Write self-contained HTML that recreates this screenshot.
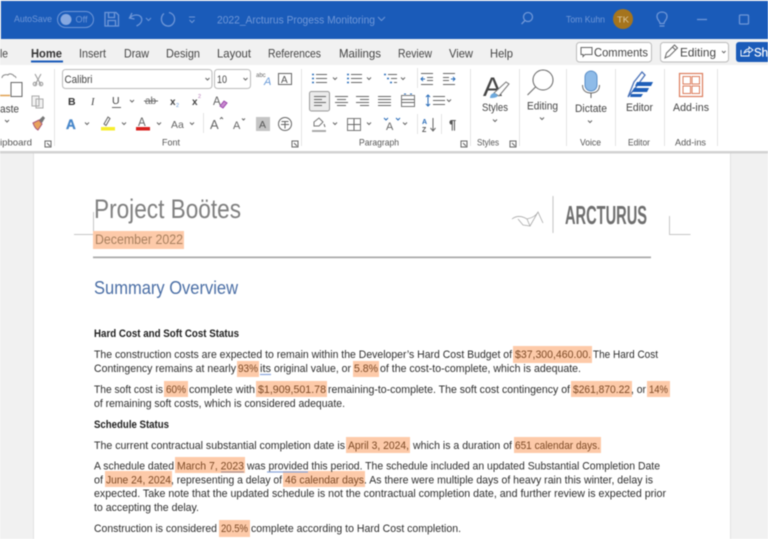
<!DOCTYPE html>
<html lang="en"><head><meta charset="utf-8"><title>Project Boötes</title>
<style>
html,body{margin:0;padding:0;width:768px;height:539px;overflow:hidden;background:#fff}
svg{display:block;font-family:"Liberation Sans",sans-serif;filter:blur(.4px)}
.d{font-size:11.2px;fill:#2e2e2e}
.h{font-size:11.2px;fill:#7d4a26}
.b{font-size:11px;fill:#1e1e1e;font-weight:bold}
.t{font-size:12px;fill:#444}
.r{font-size:11px;fill:#444}
.l{font-size:9.2px;fill:#555}
.q{font-size:9.4px;fill:#6f97d8}
.k{fill:none;stroke:#666;stroke-width:1}
.c{fill:none;stroke:#666;stroke-width:1}
.w{fill:none;stroke:#6f97d8;stroke-width:1.3}
.hl{fill:#fdcaa9}
</style></head><body>
<svg width="768" height="539" viewBox="0 0 768 539" xmlns="http://www.w3.org/2000/svg">
<rect width="768" height="539" fill="#f1f1f1"/>
<!-- title bar -->
<rect x="1" y="1" width="767" height="38" fill="#1a5bb9"/>
<text class="q" x="14" y="22" textLength="38" lengthAdjust="spacingAndGlyphs">AutoSave</text>
<rect x="57.500" y="11.500" width="36" height="16" rx="8" fill="none" stroke="#6f97d8"/>
<circle cx="66" cy="19.500" r="5.500" fill="#86a8e0"/>
<text class="q" x="75.500" y="22.500" textLength="12" lengthAdjust="spacingAndGlyphs">Off</text>
<path class="w" d="M105 12.500h11l2.500 2.500v11h-13.500zM108.500 12.500v5h6v-5M108 26v-5.500h7.500V26"/>
<path class="w" d="M132 13l-2.500 5 5 1M130 18c3-4 10-4 11.500 0 1 3-1 6-5 8"/>
<path class="w" d="M146 18l2.500 2.500 2.500-2.500" style="stroke-width:1"/>
<path class="w" d="M169 12.500c4 1 6 4 5.500 8-1 4-4 6-7 5.500-4-.5-6.500-4-6-8 .3-2 1.200-3.500 2.500-4.500"/>
<path class="w" d="M189 17h6M189.500 20l2.500 2.500 2.500-2.500" style="stroke-width:1"/>
<text x="217" y="23.500" font-size="11" fill="#6f97d8" textLength="158" lengthAdjust="spacingAndGlyphs">2022_Arcturus Progess Monitoring</text>
<path class="w" d="M378 17l3.500 3.500 3.500-3.500" style="stroke-width:1"/>
<circle cx="528" cy="17" r="4.500" class="w"/><path class="w" d="M525 20.500l-3.500 3.500"/>
<text class="q" x="566" y="22.500" textLength="39" lengthAdjust="spacingAndGlyphs">Tom Kuhn</text>
<circle cx="623" cy="19" r="10" fill="#a5741d"/>
<text x="617" y="22.500" font-size="8.600" fill="#ddc9a0" textLength="12" lengthAdjust="spacingAndGlyphs">TK</text>
<path class="w" d="M659.500 26h5M660 23.500c0-2.500-3-3.500-3-7 0-3 2.300-4.500 5-4.500s5 1.500 5 4.500c0 3.500-3 4.500-3 7z"/>
<path class="w" d="M697 19.500h10"/>
<rect class="w" x="739.500" y="15" width="9" height="9" rx="1"/>
<!-- tabs -->
<rect x="0" y="40" width="768" height="25" fill="#f1f1f1"/>
<text class="t" x="0" y="57.500" textLength="8" lengthAdjust="spacingAndGlyphs">le</text>
<text class="t" x="31" y="57.500" textLength="31" lengthAdjust="spacingAndGlyphs" style="font-weight:bold;fill:#333">Home</text>
<rect x="31" y="60.500" width="32" height="2" fill="#1a5bb9"/>
<text class="t" x="79" y="57.500" textLength="27" lengthAdjust="spacingAndGlyphs">Insert</text>
<text class="t" x="124" y="57.500" textLength="25" lengthAdjust="spacingAndGlyphs">Draw</text>
<text class="t" x="166" y="57.500" textLength="34" lengthAdjust="spacingAndGlyphs">Design</text>
<text class="t" x="217" y="57.500" textLength="34" lengthAdjust="spacingAndGlyphs">Layout</text>
<text class="t" x="268" y="57.500" textLength="53" lengthAdjust="spacingAndGlyphs">References</text>
<text class="t" x="339" y="57.500" textLength="42" lengthAdjust="spacingAndGlyphs">Mailings</text>
<text class="t" x="398" y="57.500" textLength="34" lengthAdjust="spacingAndGlyphs">Review</text>
<text class="t" x="449" y="57.500" textLength="24" lengthAdjust="spacingAndGlyphs">View</text>
<text class="t" x="490" y="57.500" textLength="23" lengthAdjust="spacingAndGlyphs">Help</text>
<rect x="576.500" y="42.500" width="75" height="19.500" rx="3" fill="#fff" stroke="#bbb"/>
<path class="k" d="M581 47.500h11v7h-7l-2 2v-2h-2z"/>
<text class="t" x="594" y="56.500" textLength="54" lengthAdjust="spacingAndGlyphs">Comments</text>
<rect x="660.500" y="42.500" width="68" height="19.500" rx="3" fill="#fff" stroke="#bbb"/>
<path class="k" d="M665 58l1.500-5 8-8 3 3-8 8zM672.500 47l3 3"/>
<text class="t" x="680" y="56.500" textLength="36" lengthAdjust="spacingAndGlyphs">Editing</text>
<path class="k" d="M722 51l1.800 1.800 1.800-1.800"/>
<rect x="736" y="42" width="34" height="20" rx="3" fill="#1a5bb9"/>
<path d="M741 50v6h8v-2M744 53c1-3 3-4 5-4v-2l4 3-4 3v-2c-2 0-3 1-5 2z" fill="none" stroke="#fff" stroke-width=".9"/>
<text x="754" y="56.500" font-size="11.500" fill="#fff" stroke="#fff" stroke-width=".2" textLength="14" lengthAdjust="spacingAndGlyphs">Sh</text>
<!-- ribbon -->
<rect x="0" y="65" width="768" height="86" fill="#fff"/>
<rect x="0" y="151" width="768" height="2.500" fill="#d2d2d2"/>
<g fill="#e3e3e3">
<rect x="54" y="69" width="1" height="77"/><rect x="301" y="69" width="1" height="77"/><rect x="470" y="69" width="1" height="77"/><rect x="519" y="69" width="1" height="77"/><rect x="566" y="69" width="1" height="77"/><rect x="615" y="69" width="1" height="77"/><rect x="664" y="69" width="1" height="77"/><rect x="717" y="69" width="1" height="77"/>
<rect x="203" y="113" width="1" height="20"/><rect x="417" y="68" width="1" height="20"/><rect x="417" y="114" width="1" height="20"/><rect x="441" y="114" width="1" height="20"/>
</g>
<!-- clipboard -->
<path d="M2 78c0-3 4-4 6-3 1-2 5-1 6 1 1 0 2 1 2 2" fill="none" stroke="#888"/>
<rect x="11" y="82.500" width="11" height="14" fill="#fff" stroke="#666"/>
<path d="M0 95.500h10" stroke="#e0a050" stroke-width="1.500"/>
<text class="r" x="0" y="112.500" textLength="19" lengthAdjust="spacingAndGlyphs">aste</text>
<path class="k" d="M5 120l2 2 2-2"/>
<path d="M35 74l6 11M41 74l-6 11" stroke="#999" fill="none"/><circle cx="35" cy="84" r="1.800" fill="none" stroke="#999"/><circle cx="41" cy="84" r="1.800" fill="none" stroke="#999"/>
<path d="M32 96h7v10h-7zM36 99h7v9h-7z" fill="#f2f2f2" stroke="#aaa"/>
<path d="M33 123l6-3 3 4-4 6c-2-1-4-4-5-7z" fill="#e8a25c" stroke="#a57"/><path d="M39 120l4-4 2 2-3 5" fill="#777"/>
<text class="l" x="0" y="145.500" textLength="32" lengthAdjust="spacingAndGlyphs">ipboard</text>
<path class="k" d="M45 141h6v6h-6zM47 143l3 3"/>
<!-- font -->
<rect x="62.500" y="69.500" width="149.500" height="19" rx="3" fill="#fff" stroke="#bbb"/>
<text class="r" x="64.500" y="83" textLength="28" lengthAdjust="spacingAndGlyphs">Calibri</text>
<path class="k" d="M205.500 78l2 2 2-2"/>
<rect x="214.500" y="69.500" width="36" height="19" rx="3" fill="#fff" stroke="#bbb"/>
<text class="r" x="217" y="83" textLength="10" lengthAdjust="spacingAndGlyphs">10</text>
<path class="k" d="M243.500 78l2 2 2-2"/>
<text x="256" y="77" font-size="6" fill="#666">abc</text>
<text x="264" y="85" font-size="11" fill="#6a9bd8" font-style="italic">A</text>
<rect x="278.500" y="73.500" width="13" height="11" fill="none" stroke="#666"/>
<text x="281" y="83" font-size="10" fill="#555">A</text>
<text x="68" y="105" font-size="10.500" font-weight="bold" fill="#333">B</text>
<text x="91" y="105" font-size="10.500" font-style="italic" fill="#444" font-family="Liberation Serif">I</text>
<text x="112" y="104" font-size="10.500" fill="#444">U</text><path class="k" d="M112 107.500h9M130 100l2 2 2-2"/>
<text x="145" y="104" font-size="10" fill="#666">ab</text><path class="k" d="M144 101h14"/>
<text x="170" y="105" font-size="10" font-weight="bold" fill="#444">x</text><text x="176" y="107" font-size="5.500" fill="#6a9bd8">2</text>
<text x="192" y="105" font-size="10" font-weight="bold" fill="#444">x</text><text x="198" y="98" font-size="5.500" fill="#b47ab8">2</text>
<text x="213" y="105" font-size="11.500" fill="#666">A</text><path d="M220 106l4-5 3 2-4 5z" fill="#c98ad0" stroke="#94a"/>
<text x="66" y="129" font-size="13.500" font-weight="bold" fill="#4a8bd0" stroke="#2a6cb0" stroke-width=".3">A</text>
<path class="k" d="M85 122.500l2 2 2-2"/>
<path class="k" d="M104 124l4-7 2 1.500-4 7z"/><rect x="101" y="127" width="14" height="3.500" fill="#f7ee2c"/>
<path class="k" d="M122 122.500l2 2 2-2"/>
<text x="138" y="126" font-size="11.500" fill="#666">A</text><rect x="136" y="127" width="14" height="3.500" fill="#d9211e"/>
<path class="k" d="M157 122.500l2 2 2-2"/>
<text x="171" y="128" font-size="10.500" fill="#666">Aa</text><path class="k" d="M190 122.500l2 2 2-2"/>
<text x="210" y="129" font-size="13" fill="#666">A</text><path class="k" d="M220 119l1.500-1.500 1.500 1.500"/>
<text x="233" y="129" font-size="11" fill="#666">A</text><path class="k" d="M242 118.500l1.500 1.500 1.500-1.500"/>
<rect x="256" y="117" width="14" height="14" fill="#c4c4c4"/><text x="259" y="128" font-size="10.500" fill="#555">A</text>
<circle cx="285" cy="124" r="6.500" class="k"/><path class="k" d="M281.500 121.500h7M281 124.500h8M285 121.500v7"/>
<text class="l" x="162" y="145.500" textLength="18" lengthAdjust="spacingAndGlyphs">Font</text>
<path class="k" d="M292 141h6v6h-6zM294 143l3 3"/>
<!-- paragraph -->
<g stroke-width="1">
<path d="M312 74.500h2M312 78.500h2M312 82.500h2" stroke="#2a6cb8" fill="none" stroke-width="1.500"/>
<path class="k" d="M316 74.500h11M316 78.500h11M316 82.500h11M333 77.500l2 2 2-2"/>
<path d="M347 74.500h2M347 78.500h2M347 82.500h2" stroke="#2a6cb8" fill="none" stroke-width="1.500"/>
<path class="k" d="M351 74.500h11M351 78.500h11M351 82.500h11M367 77.500l2 2 2-2"/>
<path d="M384 74.500h2M387 78.500h2M390 82.500h2" stroke="#2a6cb8" fill="none" stroke-width="1.500"/>
<path class="k" d="M388 74.500h9M391 78.500h6M394 82.500h3M401 77.500l2 2 2-2"/>
<path class="k" d="M421 73.500h12M427 77.500h6M427 80.500h6M421 84.500h12"/><path d="M425 79h-4m2-2l-2 2 2 2" stroke="#2a6cb8" fill="none"/>
<path class="k" d="M443 73.500h12M443 77.500h6M443 80.500h6M443 84.500h12"/><path d="M451 79h4m-2-2l2 2-2 2" stroke="#2a6cb8" fill="none"/>
<rect x="309.500" y="91.500" width="20" height="19.500" rx="2" fill="#ececec" stroke="#999"/>
<path class="k" d="M314 96.500h12M314 99.500h8M314 102.500h12M314 105.500h8"/>
<path class="k" d="M335 96.500h13M337 99.500h9M335 102.500h13M337 105.500h9"/>
<path class="k" d="M356 96.500h13M360 99.500h9M356 102.500h13M360 105.500h9"/>
<path class="k" d="M378 96.500h13M378 99.500h13M378 102.500h13M378 105.500h13"/>
<rect x="401.500" y="95.500" width="13" height="11" fill="none" stroke="#777"/><path class="k" d="M402 99.500h12M402 102.500h12"/><path d="M404 94h2M410 94h2" stroke="#2a6cb8"/>
<path d="M428 95v11m-2-9l2-2 2 2m-4 7l2 2 2-2" stroke="#2a6cb8" fill="none"/>
<path class="k" d="M433 96.500h12M433 100.500h12M433 104.500h12M447 99.500l2 2 2-2"/>
<path d="M314 122l5-4 4 4-4 4h-5z" fill="none" stroke="#777"/><path d="M312 131h14" stroke="#aaa" stroke-width="2"/><path d="M324 124l1 3" stroke="#666"/>
<path class="k" d="M333 122.500l2 2 2-2"/>
<rect x="347.500" y="118.500" width="13" height="12" fill="none" stroke="#777"/><path class="k" d="M354 119v11M348 124.500h12M367 122.500l2 2 2-2"/>
<path d="M384 118l2 2 2-2M396 118l2 2 2-2" stroke="#2a6cb8" fill="none"/><text x="386" y="130" font-size="11" fill="#666">A</text>
<path class="k" d="M403 122.500l2 2 2-2"/>
<text x="422" y="124" font-size="7" font-weight="bold" fill="#2a6cb8">A</text><text x="422" y="132" font-size="7" font-weight="bold" fill="#555">Z</text><path class="k" d="M433 118v13m-2.500-3l2.500 3 2.500-3"/>
<text x="449" y="129" font-size="13" font-weight="bold" fill="#555">¶</text>
<text class="l" x="359" y="145.500" textLength="40" lengthAdjust="spacingAndGlyphs">Paragraph</text>
<path class="k" d="M461 141h6v6h-6zM463 143l3 3"/>
</g>
<!-- styles -->
<text x="483" y="96" font-size="27" fill="#444" textLength="19" lengthAdjust="spacingAndGlyphs">A</text>
<path d="M494 93l12-11 3 2-10 12z" fill="#fff" stroke="#777"/><path d="M490 98c0-3 2-5 5-5l3 3c-2 2-5 2-8 2z" fill="#6da9dd"/>
<text class="r" x="482" y="111" textLength="26" lengthAdjust="spacingAndGlyphs">Styles</text>
<path class="k" d="M493 119.500l2 2 2-2"/>
<text class="l" x="477" y="145.500" textLength="22" lengthAdjust="spacingAndGlyphs">Styles</text>
<path class="k" d="M510 141h6v6h-6zM512 143l3 3"/>
<!-- editing -->
<circle cx="543" cy="80" r="10" fill="none" stroke="#666"/><path d="M535.500 87l-8 8" stroke="#666" fill="none"/>
<text class="r" x="527" y="109.500" textLength="31" lengthAdjust="spacingAndGlyphs">Editing</text>
<path class="k" d="M540 117.500l2 2 2-2"/>
<!-- dictate -->
<rect x="585" y="71" width="12" height="20" rx="6" fill="#8ebbe8" stroke="#5b8fc8"/>
<path d="M582.500 85c0 6 4 8 8.500 8s8.500-2 8.500-8" fill="none" stroke="#666"/><path d="M591 93v5" stroke="#666"/>
<text class="r" x="575" y="112" textLength="32" lengthAdjust="spacingAndGlyphs">Dictate</text>
<path class="k" d="M588 120.500l2 2 2-2"/>
<text class="l" x="580" y="145.500" textLength="21" lengthAdjust="spacingAndGlyphs">Voice</text>
<!-- editor -->
<path d="M628 97l6-15 8-10 3 3-9 12-8 10" fill="none" stroke="#4a72b8" stroke-width="1.300"/>
<path d="M637 82h16l-2 4h-16zM634 88h15l-2 4h-15zM631 94h12l-2 3h-11z" fill="#1f5fb8"/>
<text class="r" x="626" y="111" textLength="27" lengthAdjust="spacingAndGlyphs">Editor</text>
<text class="l" x="628" y="145.500" textLength="22" lengthAdjust="spacingAndGlyphs">Editor</text>
<!-- add-ins -->
<rect x="679.500" y="73.500" width="23" height="23" fill="#fff" stroke="#dc7d5c" stroke-width="1.200"/>
<rect x="683" y="76.500" width="7.500" height="7.500" fill="none" stroke="#dc7d5c"/><rect x="692" y="76.500" width="7.500" height="7.500" fill="none" stroke="#dc7d5c"/>
<rect x="683" y="86" width="7.500" height="7.500" fill="none" stroke="#dc7d5c"/><rect x="692" y="86" width="7.500" height="7.500" fill="none" stroke="#dc7d5c"/>
<text class="r" x="673" y="111" textLength="36" lengthAdjust="spacingAndGlyphs">Add-ins</text>
<text class="l" x="675" y="145.500" textLength="31" lengthAdjust="spacingAndGlyphs">Add-ins</text>
<!-- canvas -->
<rect x="0" y="153.500" width="768" height="386" fill="#f1f1f1"/>
<rect x="34" y="153.500" width="696" height="386" fill="#fff"/>
<rect x="33" y="153.500" width="1" height="386" fill="#e2e2e2"/><rect x="730" y="153.500" width="1" height="386" fill="#e2e2e2"/>
<!-- crop marks -->
<path d="M74 234.500h20M93.500 212v22M669.500 216v18.500h21" fill="none" stroke="#c6c6c6"/>
<!-- header -->
<text x="94" y="218" font-size="27" fill="#808080" textLength="147" lengthAdjust="spacingAndGlyphs">Project Boötes</text>
<rect class="hl" x="93" y="231" width="91" height="18"/>
<text x="95" y="244" font-size="13.500" fill="#a8805f" textLength="88" lengthAdjust="spacingAndGlyphs">December 2022</text>
<path d="M512 219c5-4 10-3 15 0 5-1 9-3 11-7M527 219l3 7-7-1-5-6M530 226l8-14 5 11" fill="none" stroke="#aaa" stroke-width=".8"/>
<rect x="552.500" y="196" width="1" height="37" fill="#c4c4c4"/>
<text x="565" y="224" font-size="26" font-weight="bold" fill="#6f6f6f" textLength="82" lengthAdjust="spacingAndGlyphs">ARCTURUS</text>
<rect x="93" y="256.500" width="558" height="1.700" fill="#a8a8a8"/>
<text x="94" y="294" font-size="18" fill="#4a6ea5" textLength="144" lengthAdjust="spacingAndGlyphs">Summary Overview</text>
<!-- highlights -->
<rect class="hl" x="513" y="346" width="79" height="17"/>
<rect class="hl" x="237" y="361" width="22" height="16"/><rect class="hl" x="353" y="361" width="26" height="16"/>
<rect class="hl" x="164" y="381" width="24" height="16"/><rect class="hl" x="256" y="381" width="71" height="16"/><rect class="hl" x="571" y="381" width="61" height="16"/><rect class="hl" x="647" y="381" width="23" height="16"/>
<rect class="hl" x="346" y="437" width="64" height="16"/><rect class="hl" x="514" y="437" width="87" height="16"/>
<rect class="hl" x="175" y="457" width="70" height="16"/>
<rect class="hl" x="105" y="471" width="67" height="16"/><rect class="hl" x="283" y="471" width="82" height="16"/>
<rect class="hl" x="219" y="520" width="31" height="17"/>
<!-- body -->
<text class="b" x="94" y="337" textLength="145" lengthAdjust="spacingAndGlyphs">Hard Cost and Soft Cost Status</text>
<text class="d" x="94" y="358" textLength="418" lengthAdjust="spacingAndGlyphs">The construction costs are expected to remain within the Developer’s Hard Cost Budget of</text>
<text class="h" x="515" y="358" textLength="76" lengthAdjust="spacingAndGlyphs">$37,300,460.00.</text>
<text class="d" x="593" y="358" textLength="65" lengthAdjust="spacingAndGlyphs">The Hard Cost</text>
<text class="d" x="94" y="372" textLength="142" lengthAdjust="spacingAndGlyphs">Contingency remains at nearly</text>
<text class="h" x="238" y="372" textLength="20" lengthAdjust="spacingAndGlyphs">93%</text>
<text class="d" x="260" y="372" textLength="11" lengthAdjust="spacingAndGlyphs">its</text>
<path d="M260 374.500h11" stroke="#8aa6dc" stroke-width="1.200"/>
<text class="d" x="274" y="372" textLength="77" lengthAdjust="spacingAndGlyphs">original value, or</text>
<text class="h" x="354" y="372" textLength="24" lengthAdjust="spacingAndGlyphs">5.8%</text>
<text class="d" x="380" y="372" textLength="201" lengthAdjust="spacingAndGlyphs">of the cost-to-complete, which is adequate.</text>
<text class="d" x="94" y="393" textLength="69" lengthAdjust="spacingAndGlyphs">The soft cost is</text>
<text class="h" x="166" y="393" textLength="20" lengthAdjust="spacingAndGlyphs">60%</text>
<text class="d" x="189" y="393" textLength="66" lengthAdjust="spacingAndGlyphs">complete with</text>
<text class="h" x="258" y="393" textLength="68" lengthAdjust="spacingAndGlyphs">$1,909,501.78</text>
<text class="d" x="328" y="393" textLength="242" lengthAdjust="spacingAndGlyphs">remaining-to-complete. The soft cost contingency of</text>
<text class="h" x="573" y="393" textLength="57" lengthAdjust="spacingAndGlyphs">$261,870.22</text>
<text class="d" x="631" y="393" textLength="15" lengthAdjust="spacingAndGlyphs">, or</text>
<text class="h" x="649" y="393" textLength="19" lengthAdjust="spacingAndGlyphs">14%</text>
<text class="d" x="94" y="407" textLength="251" lengthAdjust="spacingAndGlyphs">of remaining soft costs, which is considered adequate.</text>
<text class="b" x="94" y="428" textLength="75" lengthAdjust="spacingAndGlyphs">Schedule Status</text>
<text class="d" x="94" y="449" textLength="251" lengthAdjust="spacingAndGlyphs">The current contractual substantial completion date is</text>
<text class="h" x="348" y="449" textLength="61" lengthAdjust="spacingAndGlyphs">April 3, 2024,</text>
<text class="d" x="413" y="449" textLength="99" lengthAdjust="spacingAndGlyphs">which is a duration of</text>
<text class="h" x="515" y="449" textLength="85" lengthAdjust="spacingAndGlyphs">651 calendar days.</text>
<text class="d" x="94" y="469.500" textLength="80" lengthAdjust="spacingAndGlyphs">A schedule dated</text>
<text class="h" x="177" y="469.500" textLength="67" lengthAdjust="spacingAndGlyphs">March 7, 2023</text>
<path d="M221 472h23" stroke="#a08a90" stroke-width="1"/>
<text class="d" x="247" y="469.500" textLength="413" lengthAdjust="spacingAndGlyphs">was provided this period. The schedule included an updated Substantial Completion Date</text>
<path d="M267 472h41" stroke="#8aa6dc" stroke-width="1.200"/>
<text class="d" x="94" y="483.500" textLength="9" lengthAdjust="spacingAndGlyphs">of</text>
<text class="h" x="106" y="483.500" textLength="65" lengthAdjust="spacingAndGlyphs">June 24, 2024</text>
<text class="d" x="171" y="483.500" textLength="111" lengthAdjust="spacingAndGlyphs">, representing a delay of</text>
<text class="h" x="285" y="483.500" textLength="79" lengthAdjust="spacingAndGlyphs">46 calendar days</text>
<text class="d" x="364" y="483.500" textLength="289" lengthAdjust="spacingAndGlyphs">. As there were multiple days of heavy rain this winter, delay is</text>
<text class="d" x="94" y="497" textLength="572" lengthAdjust="spacingAndGlyphs">expected. Take note that the updated schedule is not the contractual completion date, and further review is expected prior</text>
<text class="d" x="94" y="511" textLength="105" lengthAdjust="spacingAndGlyphs">to accepting the delay.</text>
<text class="d" x="94" y="532" textLength="123" lengthAdjust="spacingAndGlyphs">Construction is considered</text>
<text class="h" x="221" y="532" textLength="27" lengthAdjust="spacingAndGlyphs">20.5%</text>
<text class="d" x="251" y="532" textLength="210" lengthAdjust="spacingAndGlyphs">complete according to Hard Cost completion.</text>
</svg>
</body></html>
